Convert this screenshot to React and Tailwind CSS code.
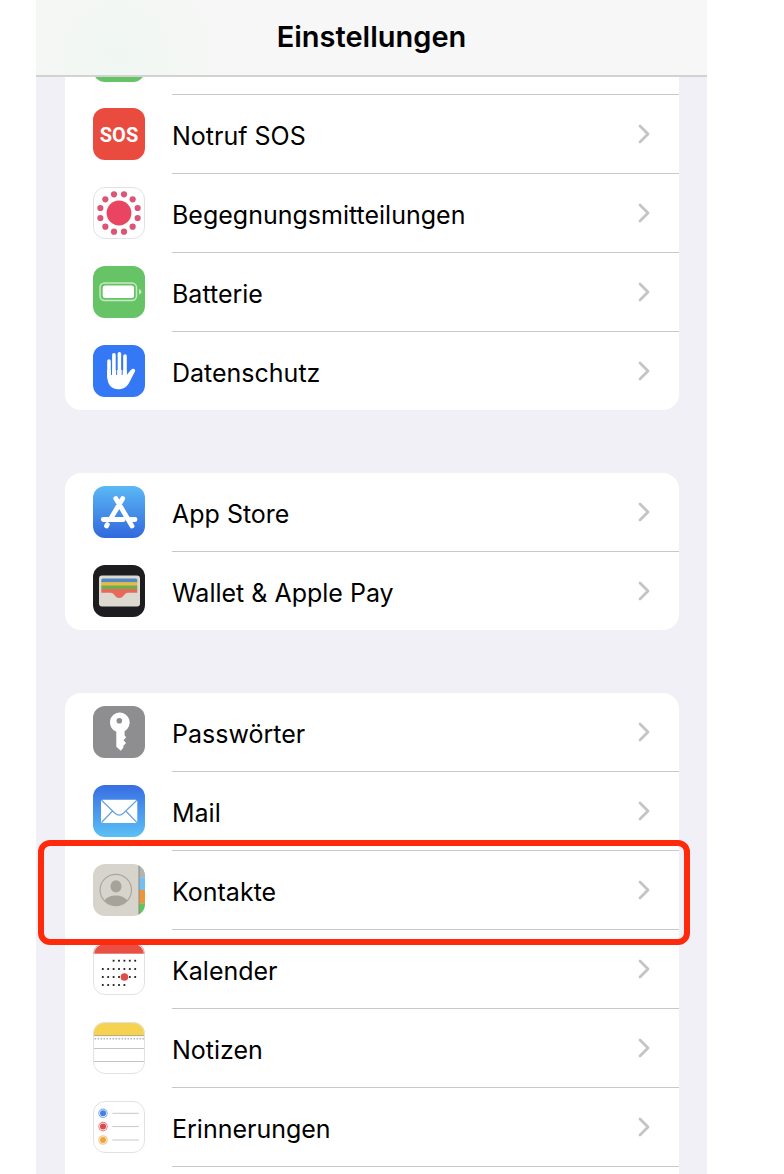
import { useId } from 'react';

function SosIcon() {
  return (
    <span className="flex size-[52px] items-center justify-center rounded-xl bg-[#e94b3f] pt-0.5 font-['Roboto',sans-serif] text-[20px] font-bold leading-none text-white">
      SOS
    </span>
  );
}

// White tiles share a thin grey outline
function Tile({ fill = '#fff', outline = false, children }) {
  const id = useId();
  return (
    <svg viewBox="0 0 52 52" className="size-[52px]" aria-hidden="true">
      <clipPath id={id}>
        <rect width="52" height="52" rx="12" />
      </clipPath>
      <g clipPath={`url(#${id})`}>
        <rect width="52" height="52" fill={fill} />
        {children}
      </g>
      {outline && (
        <rect x="0.5" y="0.5" width="51" height="51" rx="11.5" fill="none" stroke="#e2e2e4" />
      )}
    </svg>
  );
}

function ExposureIcon() {
  const dots = Array.from({ length: 12 }, (_, i) => ((i * 30 + 15) * Math.PI) / 180);
  return (
    <Tile outline>
      <circle cx="26" cy="26" r="12.4" fill="#ea4560" />
      {dots.map((a) => (
        <circle key={a} cx={26 + 19.3 * Math.cos(a)} cy={26 + 19.3 * Math.sin(a)} r="3.1" fill="#dd5575" />
      ))}
    </Tile>
  );
}

function BatteryIcon() {
  return (
    <Tile fill="#66c466">
      <rect x="7" y="17" width="36.5" height="17.5" rx="4.5" fill="none" stroke="#c5eac3" strokeWidth="1.5" />
      <rect x="9.7" y="19.6" width="31.3" height="12.3" rx="2.5" fill="#fff" />
      <path d="M46 23v5.5q2.5-.8 2.5-2.8T46 23z" fill="#c5eac3" />
    </Tile>
  );
}

function HandIcon() {
  return (
    <Tile fill="#3478f6">
      <g stroke="#fff" strokeWidth="3.6" strokeLinecap="round" fill="none">
        <path d="M16 16v16M20.9 9.7V29M26.4 8.8V29M32 11V29" />
      </g>
      <path
        d="M14.2 24v7c0 8 4 13.3 11 13.3 5.6 0 8.7-2.3 11.2-7l5.5-10.8c1-2-1.2-3.5-3.2-2.2-2 1.300-3.200 4-4.900 5.700V25H14.200z"
        fill="#fff"
      />
      <path d="M18.500 17v13M23.650 12v18M29.200 12v18" stroke="#3478f6" strokeWidth="1" />
    </Tile>
  );
}

function AppStoreIcon() {
  return (
    <svg viewBox="0 0 52 52" className="size-[52px]" aria-hidden="true">
      <defs>
        <linearGradient id="store" x2="0" y2="1">
          <stop stopColor="#5bb8f5" />
          <stop offset="1" stopColor="#3268dd" />
        </linearGradient>
      </defs>
      <rect width="52" height="52" rx="12" fill="url(#store)" />
      <g stroke="#fff" strokeWidth="4.800" strokeLinecap="round" fill="none">
        <path d="M22.800 12.500l16.200 27.500M29.700 12.500L17.500 33M14.300 38.500l-.8 1.500" />
        <path d="M10.300 33.500h20M37.500 33.500h4.500" />
      </g>
    </svg>
  );
}

function WalletIcon() {
  return (
    <Tile fill="#1d1d1f">
      <rect x="6" y="10.5" width="41" height="31" rx="3" fill="#dcd9d0" />
      <path d="M8.3 17.5V15q0-1.500 1.500-1.500h33q1.500 0 1.500 1.500v2.500z" fill="#4f8bc0" />
      <rect x="8.3" y="17.3" width="36" height="3.3" fill="#f1b740" />
      <rect x="8.3" y="20.4" width="36" height="3.8" fill="#69b148" />
      <path d="M8.3 24h36v3.800H35c-4 0-4 5.200-8.700 5.200s-4.700-5.200-8.700-5.200H8.300z" fill="#e8695c" />
    </Tile>
  );
}

function KeyIcon() {
  return (
    <Tile fill="#8e8e90">
      <path
        fillRule="evenodd"
        d="M26.300 6.500a10 10 0 0 1 5.300 18.700v4.300l1.600 1.700-2.700 3 2.500 2.900-2.700 3v1.700l-2.500 3-4.500-4V25.800A10 10 0 0 1 26.300 6.500zm0 5.500a2.800 2.800 0 1 0 0 5.600 2.800 2.800 0 0 0 0-5.600z"
        fill="#fff"
      />
    </Tile>
  );
}

function MailIcon() {
  return (
    <svg viewBox="0 0 52 52" className="size-[52px]" aria-hidden="true">
      <defs>
        <linearGradient id="mail" x2="0" y2="1">
          <stop stopColor="#386ee3" />
          <stop offset="1" stopColor="#5bc0f4" />
        </linearGradient>
      </defs>
      <rect width="52" height="52" rx="12" fill="url(#mail)" />
      <rect x="8" y="14.7" width="36.3" height="23.3" rx="1.5" fill="#fff" />
      <path
        d="M8.500 15.200l13.500 13q4.200 3.700 8.400 0l13.500-13M8.500 37.500l11-11.500M43.900 37.500L32.800 26"
        fill="none"
        stroke="#68a3dd"
        strokeWidth="1.2"
      />
    </svg>
  );
}

function ContactsIcon() {
  return (
    <Tile fill="#d6d4cb">
      <rect x="46" width="6" height="13.5" fill="#b3b3b0" />
      <rect x="46" y="13.5" width="6" height="12.5" fill="#76bdf0" />
      <rect x="46" y="26" width="6" height="13.5" fill="#ec953b" />
      <rect x="46" y="39.5" width="6" height="12.5" fill="#62c65f" />
      <path d="M46 0v52" stroke="#8b8a83" strokeWidth="1" />
      <circle cx="22.8" cy="26" r="15.7" fill="none" stroke="#a8a7a1" strokeWidth="1.2" />
      <ellipse cx="23" cy="22.4" rx="5.5" ry="6.2" fill="#a5a49b" />
      <path d="M11.300 36.500c2.500-3.500 6.500-5 11.500-5s9 1.500 11.500 5a15.500 15.500 0 0 1-23 0z" fill="#a5a49b" />
    </Tile>
  );
}

const calendarRows = [
  { y: 17.7, from: 2, to: 6 },
  { y: 26, from: 0, to: 6 },
  { y: 34, from: 0, to: 6 },
  { y: 42, from: 0, to: 4 },
];

function CalendarIcon() {
  return (
    <Tile outline>
      <rect width="52" height="10.7" fill="#e94f43" />
      {calendarRows.map((row) =>
        Array.from({ length: row.to - row.from + 1 }, (_, i) => (
          <rect key={`${row.y}-${i}`} x={8.9 + (row.from + i) * 5.4} y={row.y - 0.9} width="1.8" height="1.8" fill="#1a1a1a" />
        ))
      )}
      <circle cx="31.4" cy="34" r="3.8" fill="#df4e48" />
    </Tile>
  );
}

function NotesIcon() {
  return (
    <Tile outline>
      <rect width="52" height="13.3" fill="#f6d251" />
      <path d="M0 13.600h52" stroke="#b5a97c" strokeWidth="1" />
      <path d="M1.500 16.800h50" stroke="#b5b5b5" strokeWidth="1.5" strokeDasharray="1.5 1.5" />
      <path d="M0 26.500h52M0 39.500h52" stroke="#c4c4c6" strokeWidth="1" />
    </Tile>
  );
}

function RemindersIcon() {
  const items = [
    { y: 12.3, color: '#3f82e4' },
    { y: 25.6, color: '#da4c4c' },
    { y: 39, color: '#eda53a' },
  ];
  return (
    <Tile outline>
      {items.map(({ y, color }) => (
        <g key={color}>
          <circle cx="10" cy={y} r="4.2" fill="#fff" stroke={color} strokeOpacity="0.6" strokeWidth="1.2" />
          <circle cx="10" cy={y} r="3" fill={color} />
          <path d={`M19.3 ${y}h26.5`} stroke="#c8c8ca" strokeWidth="1" />
        </g>
      ))}
    </Tile>
  );
}

const security = [
  { label: 'Notruf SOS', icon: SosIcon },
  { label: 'Begegnungsmitteilungen', icon: ExposureIcon },
  { label: 'Batterie', icon: BatteryIcon },
  { label: 'Datenschutz', icon: HandIcon },
];

const store = [
  { label: 'App Store', icon: AppStoreIcon },
  { label: 'Wallet & Apple Pay', icon: WalletIcon },
];

const apps = [
  { label: 'Passwörter', icon: KeyIcon },
  { label: 'Mail', icon: MailIcon },
  { label: 'Kontakte', icon: ContactsIcon, highlighted: true },
  { label: 'Kalender', icon: CalendarIcon },
  { label: 'Notizen', icon: NotesIcon },
  { label: 'Erinnerungen', icon: RemindersIcon },
];

function Separator() {
  return <div className="ml-[107px] h-px bg-[#c8c8ca]" />;
}

function Row({ item }) {
  const Icon = item.icon;
  return (
    <a href="#" className="relative flex h-[78px] items-center pl-7 pr-[29px]">
      <Icon />
      <span className="ml-[27px] flex-1 pt-1 text-[25px] leading-8 text-black">{item.label}</span>
      <svg viewBox="0 0 12 20" className="h-5 w-3" fill="none" aria-hidden="true">
        <path d="M2 2l8 8-8 8" stroke="#c4c4c6" strokeWidth="2.8" strokeLinecap="round" strokeLinejoin="round" />
      </svg>
      {item.highlighted && (
        <span className="pointer-events-none absolute -bottom-4 -left-[27px] -right-[11px] -top-[11px] z-10 rounded-xl border-6 border-[#ff2a0c]" />
      )}
    </a>
  );
}

function Rows({ items }) {
  return (
    <ul>
      {items.map((item, i) => (
        <li key={item.label}>
          {i > 0 && <Separator />}
          <Row item={item} />
        </li>
      ))}
    </ul>
  );
}

export default function App() {
  return (
    <div className="min-h-screen bg-white pl-9 pr-[77px] font-['Inter',sans-serif]">
      <div className="min-h-screen bg-[#f1f0f6]">
        <header className="flex h-[77px] items-center justify-center border-b-2 border-[#d2d2d2] bg-[#f7f7f7] bg-radial-[circle_at_12%_75%] from-[#f0f7f1] to-[#f7f7f7] to-20% pb-0.5">
          <h1 className="text-[29px] font-semibold leading-9 text-black">Einstellungen</h1>
        </header>

        <main className="flex flex-col gap-[63px] pl-[29px] pr-7">
          <section className="rounded-b-2xl bg-white">
            {/* Bottom edge of the row scrolled under the header */}
            <div className="h-[17px] pl-7">
              <div className="flex h-[5px] w-[52px] items-end overflow-hidden">
                <div className="size-[52px] shrink-0 rounded-xl bg-[#66c466]" />
              </div>
            </div>
            <Separator />
            <Rows items={security} />
          </section>

          <section className="rounded-2xl bg-white">
            <Rows items={store} />
          </section>

          <section className="rounded-t-2xl bg-white pb-2">
            <Rows items={apps} />
            <Separator />
          </section>
        </main>
      </div>
    </div>
  );
}
